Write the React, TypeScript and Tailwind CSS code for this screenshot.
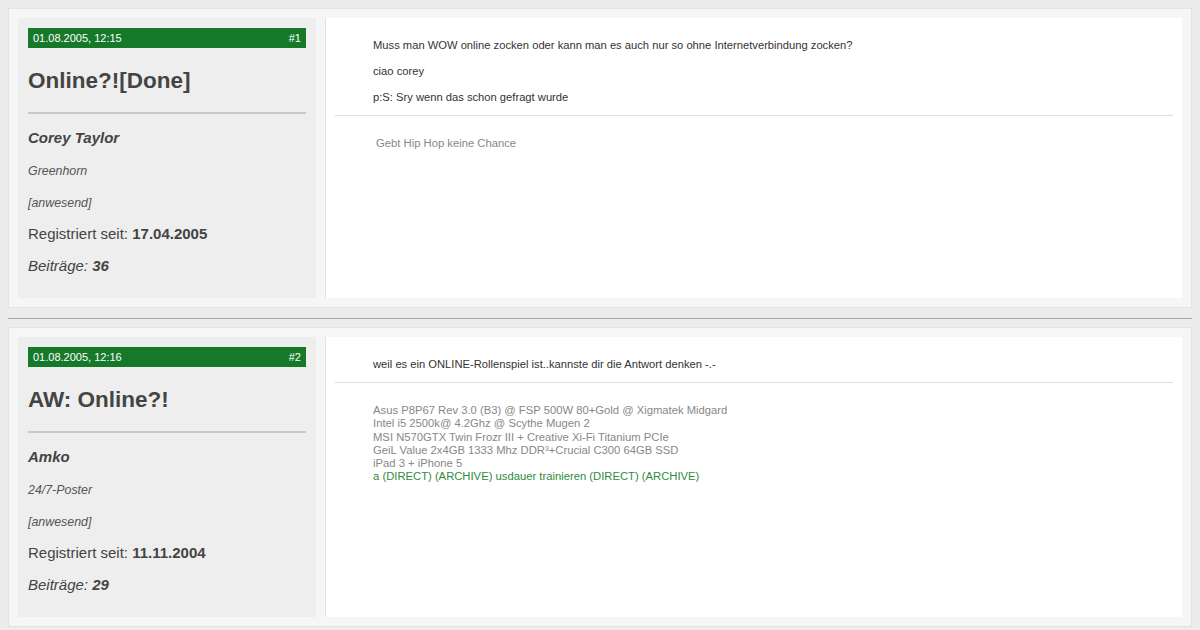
import React from "react";

type Post = {
  date: string;
  num: string;
  title: string;
  user: string;
  rank: string;
  reg: string;
  posts: string;
  message: string[];
  sig: React.ReactNode;
};

const posts: Post[] = [
  {
    date: "01.08.2005, 12:15",
    num: "#1",
    title: "Online?![Done]",
    user: "Corey Taylor",
    rank: "Greenhorn",
    reg: "17.04.2005",
    posts: "36",
    message: [
      "Muss man WOW online zocken oder kann man es auch nur so ohne Internetverbindung zocken?",
      "ciao corey",
      "p:S: Sry wenn das schon gefragt wurde",
    ],
    sig: <div className="ml-[3px]">Gebt Hip Hop keine Chance</div>,
  },
  {
    date: "01.08.2005, 12:16",
    num: "#2",
    title: "AW: Online?!",
    user: "Amko",
    rank: "24/7-Poster",
    reg: "11.11.2004",
    posts: "29",
    message: ["weil es ein ONLINE-Rollenspiel ist..kannste dir die Antwort denken -.-"],
    sig: (
      <div className="leading-[13.3px]">
        <div>Asus P8P67 Rev 3.0 (B3) @ FSP 500W 80+Gold @ Xigmatek Midgard</div>
        <div>Intel i5 2500k@ 4.2Ghz @ Scythe Mugen 2</div>
        <div>MSI N570GTX Twin Frozr III + Creative Xi-Fi Titanium PCIe</div>
        <div>GeiL Value 2x4GB 1333 Mhz DDR³+Crucial C300 64GB SSD</div>
        <div>iPad 3 + iPhone 5</div>
        <div className="text-[#2f8c3c]">a (DIRECT) (ARCHIVE) usdauer trainieren (DIRECT) (ARCHIVE)</div>
      </div>
    ),
  },
];

function PostBox({ p }: { p: Post }) {
  return (
    <div className="flex h-[300px] border border-[#e3e3e3] bg-[#f6f6f6] p-[9px]">
      <div className="w-[298px] shrink-0 bg-[#eeeeee] px-[10px] pt-[10px]">
        <div className="flex h-[20px] items-center justify-between bg-[#16792a] px-[5px] text-[11px] text-white">
          <span>{p.date}</span>
          <span>{p.num}</span>
        </div>
        <div className="mt-[19px] text-[22.5px] font-bold leading-[28px] text-[#444]">{p.title}</div>
        <div className="mt-[17px] h-[2px] bg-[#c8c8c8]" />
        <div className="mt-[14px] text-[15px] font-bold italic leading-[20px] text-[#444]">{p.user}</div>
        <div className="mt-[16px] text-[12.4px] italic leading-[14px] text-[#555]">{p.rank}</div>
        <div className="mt-[18px] text-[12.4px] italic leading-[14px] text-[#555]">[anwesend]</div>
        <div className="mt-[14px] text-[15px] leading-[20px] text-[#444]">
          Registriert seit: <b>{p.reg}</b>
        </div>
        <div className="mt-[12px] text-[15px] italic leading-[20px] text-[#444]">
          Beiträge: <b>{p.posts}</b>
        </div>
      </div>
      <div className="ml-[9px] flex-1 border-l border-[#e2e2e2] bg-white px-[9px]">
        <div className="px-[38px] pb-[11px] pt-[21px] text-[11.2px] leading-[13px] text-[#333]">
          {p.message.map((m, i) => (
            <p key={i} className={i > 0 ? "mt-[13px]" : ""}>
              {m}
            </p>
          ))}
        </div>
        <div className="h-px bg-[#dddddd]" />
        <div className="px-[38px] pt-[21px] text-[11.25px] leading-[13px] text-[#888]">{p.sig}</div>
      </div>
    </div>
  );
}

export default function App() {
  return (
    <div
      className="h-[630px] w-[1200px] overflow-hidden bg-[#ececec] px-[8px] pt-[8px]"
      style={{ fontFamily: '"Liberation Sans", Arial, sans-serif' }}
    >
      <PostBox p={posts[0]} />
      <div className="mb-[8px] mt-[10px] h-px bg-[#a8a8a8]" />
      <PostBox p={posts[1]} />
    </div>
  );
}
